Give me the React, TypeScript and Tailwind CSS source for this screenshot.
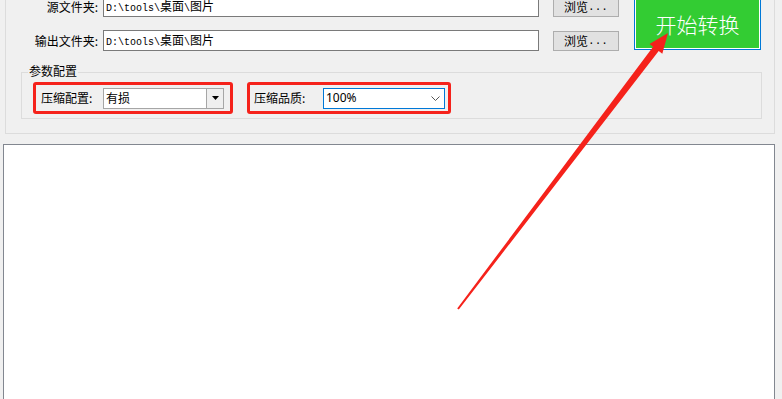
import React from "react";

const cjk = { fontFamily: '"Noto Sans CJK SC", "Noto Sans", sans-serif' };
const mono = { fontFamily: '"Liberation Mono", "Noto Sans CJK SC", monospace' };

function PathText() {
  return (
    <span className="whitespace-nowrap">
      <span style={mono} className="text-[10px]">D:\tools\</span>
      <span style={cjk} className="text-[12px]">桌面</span>
      <span style={mono} className="text-[10px]">\</span>
      <span style={cjk} className="text-[12px]">图片</span>
    </span>
  );
}

function Row({ label }: { label: string }) {
  return (
    <div className="flex h-[21px] items-center">
      <div className="w-[92px] text-right text-[12px] leading-[16px] text-black">{label}</div>
      <div className="ml-[5px] flex h-[21px] w-[436px] items-center border border-[#7a7a7a] bg-white pl-[2px] leading-[16px]">
        <PathText />
      </div>
      <div className="ml-[14px] flex h-[20px] w-[66px] items-center justify-center border border-[#adadad] bg-[#e1e1e1] text-[12px] leading-[16px]">
        <span>浏览</span>
        <span style={mono} className="text-[11px]">...</span>
      </div>
    </div>
  );
}

export default function App() {
  return (
    <div style={cjk} className="relative flex h-[399px] w-[782px] flex-col overflow-hidden bg-[#f0f0f0] text-black">
      <div className="ml-[5px] mt-[-30px] h-[164px] w-[770px] shrink-0 border border-[#dcdcdc] pt-[25px]">
        <div className="flex">
          <div className="flex flex-col gap-[13px]">
            <Row label="源文件夹:" />
            <Row label="输出文件夹:" />
          </div>
          <div className="ml-[15px] flex h-[54px] w-[127px] items-center justify-center border border-[#0078d7] bg-[#33cc33] pt-[2px] text-[21px] font-light leading-[28px] text-white shadow-[inset_0_0_0_1px_#ffffff]">
            开始转换
          </div>
        </div>
        <div className="relative ml-[15px] mt-[21px] h-[47px] w-[741px] border border-[#dcdcdc] pl-[11px] pt-[9px]">
          <span className="absolute left-[6px] top-[-10px] bg-[#f0f0f0] px-[1px] text-[12px] leading-[16px]">参数配置</span>
          <div className="flex gap-[14px]">
            <div className="flex h-[32px] w-[200px] items-center rounded-[3px] border-[3px] border-[#f5221b] pl-[5px]">
              <span className="w-[62px] text-[12px] leading-[16px]">压缩配置:</span>
              <div className="flex h-[21px] w-[121px] items-center border border-[#a6a6a6] bg-white">
                <span className="flex-1 pl-[2px] text-[12px] leading-[16px]">有损</span>
                <div className="flex h-full w-[17px] items-center justify-center border-l border-[#a6a6a6] bg-[#efefef]">
                  <svg width="7" height="4" viewBox="0 0 7 4"><path d="M0 0h7L3.5 4z" fill="#000" /></svg>
                </div>
              </div>
            </div>
            <div className="flex h-[32px] w-[204px] items-center rounded-[3px] border-[3px] border-[#f5221b] pl-[4px]">
              <span className="w-[69px] text-[12px] leading-[16px]">压缩品质:</span>
              <div className="flex h-[21px] w-[122px] items-center border border-[#0078d7] bg-white">
                <span className="flex-1 pl-[2px] text-[12px] leading-[16px]" style={{ fontFamily: '"Noto Sans", sans-serif' }}>100%</span>
                <svg className="mr-[4px]" width="9" height="5" viewBox="0 0 9 5"><path d="M0.5 0.5L4.5 4.5L8.5 0.5" stroke="#555" strokeWidth="1" fill="none" /></svg>
              </div>
            </div>
          </div>
        </div>
      </div>
      <div className="ml-[3px] mt-[10px] h-[270px] w-[772px] shrink-0 border border-[#828790] bg-white" />
      <svg className="pointer-events-none absolute left-0 top-0" width="782" height="399" viewBox="0 0 782 399">
        <polygon
          points="457.2,308.4 653.1,46.8 649.5,44.1 668,33 662.3,53.7 658.7,51.0 458.8,309.6"
          fill="#f5221b"
        />
      </svg>
    </div>
  );
}
